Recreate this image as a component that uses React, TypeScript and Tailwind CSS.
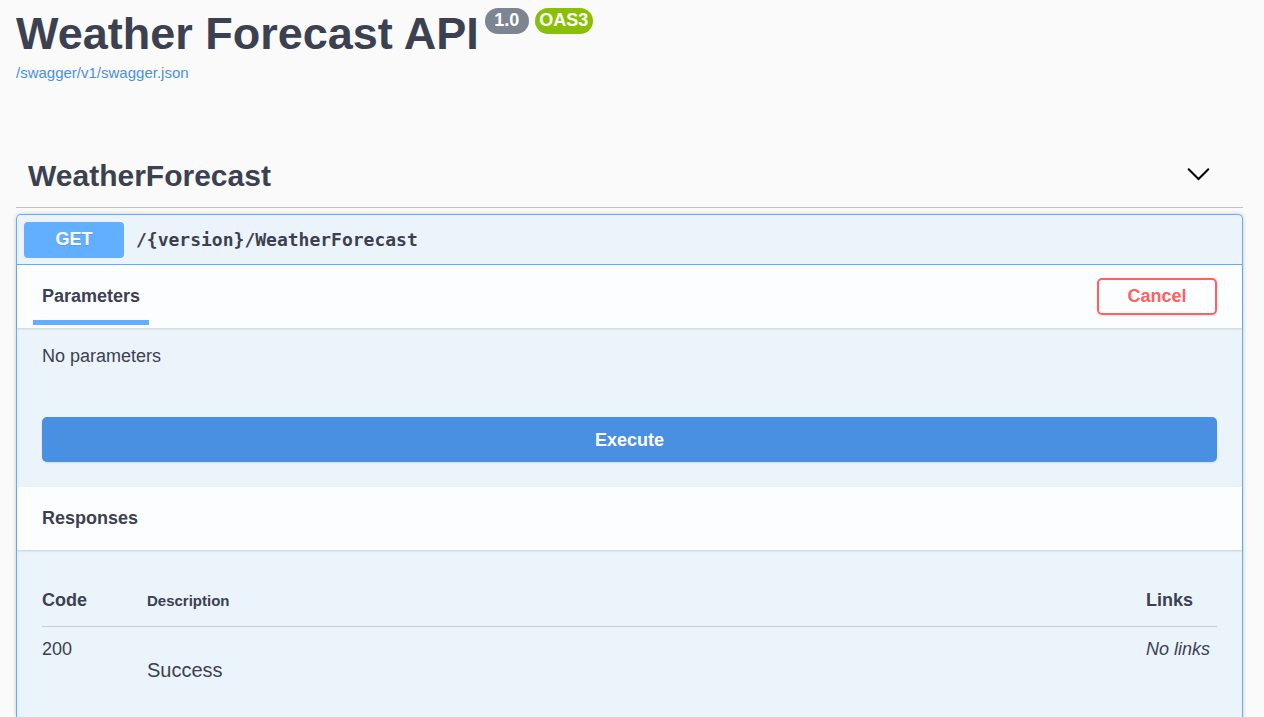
import { useState } from "react";
import type { ReactNode } from "react";

function SectionHeader({ children }: { children: ReactNode }) {
  return (
    <div className="flex h-[63px] items-center justify-between bg-[#fcfdff] px-[25px] shadow-[0_1px_2px_rgba(0,0,0,0.15)]">
      {children}
    </div>
  );
}

function Badge({ className, children }: { className: string; children: ReactNode }) {
  return (
    <span className={`flex h-[26px] items-center justify-center rounded-full pb-[2px] font-bold text-white ${className}`}>
      {children}
    </span>
  );
}

export default function App() {
  const [open, setOpen] = useState(true);

  return (
    <div className="flex min-h-screen flex-col bg-[#fafafa] pr-[21px] pl-4 font-['Liberation_Sans',Arial,sans-serif] text-[#3b4151]">
      <header className="pt-2">
        <div className="flex items-start gap-[6px]">
          <h1 className="text-[45px] leading-[52px] font-bold">Weather Forecast API</h1>
          <Badge className="w-11 bg-[#7d8492] text-lg">1.0</Badge>
          <Badge className="w-[58px] bg-[#89bf04] text-lg">OAS3</Badge>
        </div>
        <a href="/swagger/v1/swagger.json" className="mt-1 block w-fit text-[15px] leading-[18px] text-[#4990e2]">
          /swagger/v1/swagger.json
        </a>
      </header>

      <main className="mt-[62px] flex grow flex-col">
        <h2 className="border-b border-[#c0c1c2]">
          <button
            type="button"
            aria-expanded={open}
            onClick={() => setOpen(!open)}
            className="flex h-[63px] w-full items-center justify-between pr-[33px] pl-3 text-[30px] font-bold"
          >
            WeatherForecast
            <svg className="h-6 w-6" viewBox="0 0 24 24" fill="none" stroke="#000" strokeWidth="2" strokeLinecap="round" aria-hidden="true">
              <path d="M2.7 5.3 12.5 15 22.3 5.3" />
            </svg>
          </button>
        </h2>

        {open && (
          <section className="mt-[6px] flex grow flex-col rounded-t-[5px] border border-b-0 border-[#61affe] bg-[#ebf3fb] shadow-[0_0_4px_rgba(0,0,0,0.19)]">
            <div className="flex h-[50px] items-center gap-3 border-b border-[#61affe] px-[7px]">
              <span className="flex h-9 w-[100px] items-center justify-center rounded-[4px] bg-[#61affe] pb-[2px] text-lg font-bold text-white [text-shadow:0_1px_0_rgba(0,0,0,0.1)]">
                GET
              </span>
              <span className="font-['DejaVu_Sans_Mono',monospace] text-lg font-bold">/{"{version}"}/WeatherForecast</span>
            </div>

            <SectionHeader>
              <h3 className="-ml-[9px] flex h-full flex-col justify-end pb-[3px]">
                <span className="border-b-5 border-[#61affe] px-[9px] pb-2 text-lg leading-8 font-bold">Parameters</span>
              </h3>
              <button
                type="button"
                className="h-[37px] w-[120px] rounded-[5px] border-2 border-[#ff6060] pb-[2px] text-lg font-bold text-[#ff6060] shadow-[0_1px_2px_rgba(0,0,0,0.1)]"
              >
                Cancel
              </button>
            </SectionHeader>

            <div className="px-[25px] pt-4 pb-[25px]">
              <p className="text-lg leading-6">No parameters</p>
              <button
                type="button"
                className="mt-[49px] h-[45px] w-full rounded-[5px] bg-[#4990e2] text-lg font-bold text-white shadow-[0_1px_2px_rgba(0,0,0,0.1)]"
              >
                Execute
              </button>
            </div>

            <SectionHeader>
              <h3 className="pb-[2px] text-lg font-bold">Responses</h3>
            </SectionHeader>

            <div className="px-[25px] pt-[25px]">
              <table className="w-full table-fixed text-left">
                <colgroup>
                  <col className="w-[105px]" />
                  <col />
                  <col className="w-[71px]" />
                </colgroup>
                <thead>
                  <tr className="border-b border-[#c4cbd9]">
                    <th className="h-[51px] text-lg font-bold">Code</th>
                    <th className="h-[51px] pt-[2px] text-[15px] font-bold">Description</th>
                    <th className="h-[51px] text-lg font-bold">Links</th>
                  </tr>
                </thead>
                <tbody>
                  <tr className="align-top">
                    <td className="pt-[10px] text-lg leading-6">200</td>
                    <td className="pt-[31px] text-xl leading-6">Success</td>
                    <td className="pt-[10px] text-lg leading-6 whitespace-nowrap italic">No links</td>
                  </tr>
                </tbody>
              </table>
            </div>
          </section>
        )}
      </main>
    </div>
  );
}
